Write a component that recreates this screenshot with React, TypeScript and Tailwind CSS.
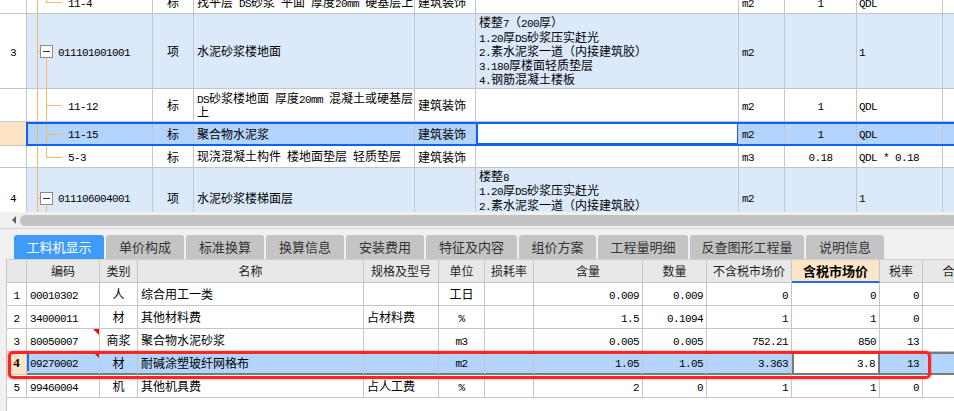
import React from 'react';

const MONO = "font-['Liberation_Mono',monospace] text-[11px] tracking-[-0.6px] leading-none";

function T({ s }: { s: string }) {
  const parts = s.split(/([\x20-\x7e]+)/).filter((p) => p.length > 0);
  return (
    <span className="whitespace-pre">
      {parts.map((p, i) =>
        /^[\x20-\x7e]+$/.test(p) ? (
          <span key={i} className={MONO}>
            {p}
          </span>
        ) : (
          <span key={i}>{p}</span>
        )
      )}
    </span>
  );
}

const C =
  'border-r border-b border-[#c6c6c6] flex items-center whitespace-nowrap overflow-hidden text-[12px] leading-[14px]';
const TOP =
  'grid grid-cols-[27px_126px_41px_221px_61px_263px_46px_72px_86px_40px]';

function TreeCell({ type, text }: { type: 'child' | 'last' | 'parent'; text: string }) {
  if (type === 'parent') {
    return (
      <div className={`${C} relative pl-[31px]`}>
        <div className="absolute left-[10px] top-0 bottom-0 w-px bg-[#f4b860]" />
        <div className="absolute left-[10px] top-1/2 w-[3px] h-px bg-[#f4b860]" />
        <div className="absolute left-[19px] top-1/2 bottom-0 w-px bg-[#f4b860]" />
        <div className="absolute left-[13px] top-1/2 -mt-[6px] w-[13px] h-[13px] border border-[#8a8a8a] bg-white flex items-center justify-center">
          <div className="w-[7px] h-px bg-[#333]" />
        </div>
        <span className="relative">
          <T s={text} />
        </span>
      </div>
    );
  }
  return (
    <div className={`${C} relative pl-[41px]`}>
      <div className="absolute left-[10px] top-0 bottom-0 w-px bg-[#f4b860]" />
      <div
        className={`absolute left-[19px] top-0 w-px bg-[#f4b860] ${type === 'last' ? 'h-1/2' : 'bottom-0'}`}
      />
      <div className="absolute left-[19px] top-1/2 w-[16px] h-px bg-[#f4b860]" />
      <span className="relative">
        <T s={text} />
      </span>
    </div>
  );
}

function Lines({ lines }: { lines: string[] }) {
  return (
    <div className={`${C} flex-col !items-start justify-center pl-[3px]`}>
      {lines.map((l, i) => (
        <div key={i} className="h-[14.3px] leading-[14.3px] shrink-0">
          <T s={l} />
        </div>
      ))}
    </div>
  );
}

const B =
  'border-r border-b border-[#c6c6c6] flex items-center whitespace-nowrap overflow-hidden text-[12px] leading-[14px]';
const BOT =
  'grid grid-cols-[20px_73px_38px_226px_75px_46px_49px_109px_64px_85px_88px_43px_64px]';

const data = [
  { n: '1', code: '00010302', cat: '人', name: '综合用工一类', spec: '', unit: '工日', hl: '0.009', qty: '0.009', p1: '0', p2: '0', tax: '0', tri: false },
  { n: '2', code: '34000011', cat: '材', name: '其他材料费', spec: '占材料费', unit: '%', hl: '1.5', qty: '0.1094', p1: '1', p2: '1', tax: '0', tri: false },
  { n: '3', code: '80050007', cat: '商浆', name: '聚合物水泥砂浆', spec: '', unit: 'm3', hl: '0.005', qty: '0.005', p1: '752.21', p2: '850', tax: '13', tri: true },
  { n: '4', code: '09270002', cat: '材', name: '耐碱涂塑玻纤网格布', spec: '', unit: 'm2', hl: '1.05', qty: '1.05', p1: '3.363', p2: '3.8', tax: '13', tri: true },
  { n: '5', code: '99460004', cat: '机', name: '其他机具费', spec: '占人工费', unit: '%', hl: '2', qty: '0', p1: '1', p2: '1', tax: '0', tri: false },
];

const tabs: [string, string][] = [
  ['工料机显示', 'w-[90px]'],
  ['单价构成', 'w-[78px]'],
  ['标准换算', 'w-[78px]'],
  ['换算信息', 'w-[78px]'],
  ['安装费用', 'w-[78px]'],
  ['特征及内容', 'w-[91px]'],
  ['组价方案', 'w-[77px]'],
  ['工程量明细', 'w-[90px]'],
  ['反查图形工程量', 'w-[114px]'],
  ['说明信息', 'w-[78px]'],
];

export default function App() {
  return (
    <div className="w-[954px] h-[411px] overflow-hidden bg-white text-black font-['Noto_Sans_CJK_SC',sans-serif] text-[12px]">
      {/* top grid (scrolled) */}
      <div className="h-[212px] overflow-hidden">
        <div className="w-[983px] -mt-[9px]">
          {/* 11-4 */}
          <div className={`${TOP} h-[23px] bg-white`}>
            <div className={C} />
            <TreeCell type="last" text="11-4" />
            <div className={`${C} justify-center`}>标</div>
            <div className={`${C} pl-[3px]`}><T s="找平层 DS砂浆 平面 厚度20mm 硬基层上" /></div>
            <div className={`${C} pl-[3px]`}>建筑装饰</div>
            <div className={C} />
            <div className={`${C} pl-[3px]`}><T s="m2" /></div>
            <div className={`${C} justify-center`}><T s="1" /></div>
            <div className={`${C} pl-[2px]`}><T s="QDL" /></div>
            <div className={C} />
          </div>
          {/* 3 */}
          <div className={`${TOP} h-[75px] bg-[#dce9fb]`}>
            <div className={`${C} justify-center bg-white`}><T s="3" /></div>
            <TreeCell type="parent" text="011101001001" />
            <div className={`${C} justify-center`}>项</div>
            <div className={`${C} pl-[3px]`}>水泥砂浆楼地面</div>
            <div className={C} />
            <Lines lines={['楼整7（200厚）', '1.20厚DS砂浆压实赶光', '2.素水泥浆一道（内接建筑胶）', '3.180厚楼面轻质垫层', '4.钢筋混凝土楼板']} />
            <div className={`${C} pl-[3px]`}><T s="m2" /></div>
            <div className={C} />
            <div className={`${C} pl-[2px]`}><T s="1" /></div>
            <div className={C} />
          </div>
          {/* 11-12 */}
          <div className={`${TOP} h-[33px] bg-white`}>
            <div className={C} />
            <TreeCell type="child" text="11-12" />
            <div className={`${C} justify-center`}>标</div>
            <Lines lines={['DS砂浆楼地面 厚度20mm 混凝土或硬基层', '上']} />
            <div className={`${C} pl-[3px]`}>建筑装饰</div>
            <div className={C} />
            <div className={`${C} pl-[3px]`}><T s="m2" /></div>
            <div className={`${C} justify-center`}><T s="1" /></div>
            <div className={`${C} pl-[2px]`}><T s="QDL" /></div>
            <div className={C} />
          </div>
          {/* 11-15 selected */}
          <div className={`${TOP} h-[24px] bg-[#b3d4fc] relative`}>
            <div className={`${C} bg-[#fde4c4]`} />
            <TreeCell type="child" text="11-15" />
            <div className={`${C} justify-center`}>标</div>
            <div className={`${C} pl-[3px]`}>聚合物水泥浆</div>
            <div className={`${C} pl-[3px]`}>建筑装饰</div>
            <div className={`${C} bg-white relative`}>
              <div className="absolute left-0 top-0 bottom-0 right-[-1px] border-2 border-[#0b63f3]" />
            </div>
            <div className={`${C} pl-[3px]`}><T s="m2" /></div>
            <div className={`${C} justify-center`}><T s="1" /></div>
            <div className={`${C} pl-[2px]`}><T s="QDL" /></div>
            <div className={C} />
            <div className="absolute left-[26px] right-0 top-0 bottom-0 border-2 border-[#0b63f3] pointer-events-none" />
          </div>
          {/* 5-3 */}
          <div className={`${TOP} h-[22px] bg-white`}>
            <div className={C} />
            <TreeCell type="last" text="5-3" />
            <div className={`${C} justify-center`}>标</div>
            <div className={`${C} pl-[3px]`}><T s="现浇混凝土构件 楼地面垫层 轻质垫层" /></div>
            <div className={`${C} pl-[3px]`}>建筑装饰</div>
            <div className={C} />
            <div className={`${C} pl-[3px]`}><T s="m3" /></div>
            <div className={`${C} justify-center`}><T s="0.18" /></div>
            <div className={`${C} pl-[2px]`}><T s="QDL * 0.18" /></div>
            <div className={C} />
          </div>
          {/* 4 */}
          <div className={`${TOP} h-[60px] bg-[#dce9fb]`}>
            <div className={`${C} justify-center bg-white`}><T s="4" /></div>
            <TreeCell type="parent" text="011106004001" />
            <div className={`${C} justify-center`}>项</div>
            <div className={`${C} pl-[3px]`}>水泥砂浆楼梯面层</div>
            <div className={C} />
            <Lines lines={['楼整8', '1.20厚DS砂浆压实赶光', '2.素水泥浆一道（内接建筑胶）', '3.钢筋混凝土楼梯']} />
            <div className={`${C} pl-[3px]`}><T s="m2" /></div>
            <div className={C} />
            <div className={`${C} pl-[2px]`}><T s="1" /></div>
            <div className={C} />
          </div>
        </div>
      </div>

      {/* horizontal scrollbar */}
      <div className="h-[16px] bg-[#f0f0f0] flex items-center pl-[12px] overflow-hidden">
        <div className="w-0 h-0 border-y-[4px] border-y-transparent border-r-[4px] border-r-[#606060]" />
        <div className="ml-[4px] h-[11px] flex-1 mr-[-20px] rounded-l-full bg-[#c2c2c2]" />
      </div>
      <div className="h-px bg-[#d2d2d2]" />

      {/* tabs */}
      <div className="h-[30px] bg-[#f0f0f0] flex items-end pl-[14px] gap-[2px]">
        {tabs.map(([t, w], i) => (
          <div
            key={t}
            className={`${w} h-[24px] shrink-0 rounded-t-[3px] flex items-center justify-center text-[13px] ${
              i === 0 ? 'bg-[#3e9bf8] text-white' : 'bg-[#c4c4c4] text-[#333]'
            }`}
          >
            {t}
          </div>
        ))}
      </div>

      {/* bottom grid */}
      <div className="relative h-[152px] flex overflow-hidden">
        <div className="w-[6px] shrink-0 bg-[#f0f0f0]" />
        <div className="w-[981px] shrink-0 border-l border-[#c6c6c6]">
          <div className={`${BOT} h-[24px] bg-[#e8e8e8] text-[#222] border-t border-[#d0d0d0]`}>
            <div className={B} />
            <div className={`${B} justify-center`}>编码</div>
            <div className={`${B} justify-center`}>类别</div>
            <div className={`${B} justify-center`}>名称</div>
            <div className={`${B} justify-center`}>规格及型号</div>
            <div className={`${B} justify-center`}>单位</div>
            <div className={`${B} justify-center`}>损耗率</div>
            <div className={`${B} justify-center`}>含量</div>
            <div className={`${B} justify-center`}>数量</div>
            <div className={`${B} justify-center`}>不含税市场价</div>
            <div className={`${B} justify-center bg-[#fde6c8] !text-[13px] font-bold text-black border-b-2 !border-b-[#1a6ef5]`}>含税市场价</div>
            <div className={`${B} justify-center`}>税率</div>
            <div className={`${B} justify-center`}>合价</div>
          </div>
          {data.map((r) => {
            const sel = r.n === '4';
            const cell = sel ? `${B} bg-[#b3d4fc] border-b-2 !border-b-[#7a7a7a]` : B;
            return (
              <div key={r.n} className={`${BOT} h-[23px]`}>
                <div className={`${B} justify-center ${sel ? 'bg-[#fde4c4] font-bold' : ''}`}>
                  {sel ? <span className="font-['Liberation_Serif',serif] text-[13px] font-bold">4</span> : <T s={r.n} />}
                </div>
                <div className={`${cell} relative pl-[3px]`}>
                  {sel && <div className="absolute left-0 top-[2px] bottom-[2px] w-[2px] bg-[#1a6ef5]" />}
                  {r.tri && (
                    <div className="absolute top-0 right-0 w-0 h-0 border-t-[6px] border-t-[#e01010] border-l-[6px] border-l-transparent" />
                  )}
                  <T s={r.code} />
                </div>
                <div className={`${cell} justify-center`}>{r.cat}</div>
                <div className={`${cell} pl-[3px]`}>{r.name}</div>
                <div className={`${cell} pl-[3px]`}>{r.spec}</div>
                <div className={`${cell} justify-center`}><T s={r.unit} /></div>
                <div className={cell} />
                <div className={`${cell} justify-end pr-[3px]`}><T s={r.hl} /></div>
                <div className={`${cell} justify-end pr-[3px]`}><T s={r.qty} /></div>
                <div className={`${cell} justify-end pr-[3px]`}><T s={r.p1} /></div>
                {sel ? (
                  <div className="flex items-center justify-end pr-[3px] whitespace-nowrap overflow-hidden text-[12px] leading-[14px] bg-white border-x-2 border-b-2 border-[#7a7a7a]">
                    <T s={r.p2} />
                  </div>
                ) : (
                  <div className={`${B} justify-end pr-[3px]`}>
                    <T s={r.p2} />
                  </div>
                )}
                <div className={`${cell} justify-end pr-[3px]`}><T s={r.tax} /></div>
                <div className={sel ? `${cell} border-t-2 border-t-[#7a7a7a]` : cell} />
              </div>
            );
          })}
        </div>
        <div className="absolute left-[8px] top-[92px] w-[923px] h-[28px] border-[3px] border-[#ff2424] rounded-[5px] pointer-events-none shadow-[0_0_2px_rgba(255,0,0,0.6)]" />
      </div>
    </div>
  );
}
